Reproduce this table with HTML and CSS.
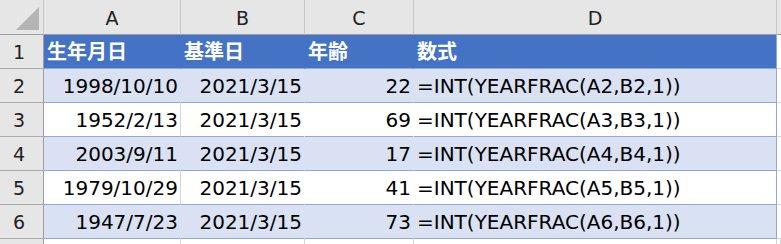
FILE: index.html
```html
<!DOCTYPE html>
<html lang="ja">
<head>
<meta charset="utf-8">
<title>Sheet</title>
<link rel="stylesheet" href="styles.css">
</head>
<body>
<div class="sheet">
  <div class="corner"><svg class="tri" width="26" height="25" viewBox="0 0 26 25"><polygon points="24,1 24,24 1,24" fill="#b4b4b4"/></svg></div>
  <div class="ch">A</div>
  <div class="ch">B</div>
  <div class="ch">C</div>
  <div class="ch">D</div>
  <div class="ch ch-e"></div>

  <div class="rh">1</div>
  <div class="c th">生年月日</div>
  <div class="c th">基準日</div>
  <div class="c th">年齢</div>
  <div class="c th last">数式</div>
  <div class="c e"></div>

  <div class="rh">2</div>
  <div class="c band num">1998/10/10</div>
  <div class="c band num">2021/3/15</div>
  <div class="c band num">22</div>
  <div class="c band last f">=INT(YEARFRAC(A2,B2,1))</div>
  <div class="c e"></div>

  <div class="rh">3</div>
  <div class="c plain num grid">1952/2/13</div>
  <div class="c plain num">2021/3/15</div>
  <div class="c plain num">69</div>
  <div class="c plain last f">=INT(YEARFRAC(A3,B3,1))</div>
  <div class="c e"></div>

  <div class="rh">4</div>
  <div class="c band num">2003/9/11</div>
  <div class="c band num">2021/3/15</div>
  <div class="c band num">17</div>
  <div class="c band last f">=INT(YEARFRAC(A4,B4,1))</div>
  <div class="c e"></div>

  <div class="rh">5</div>
  <div class="c plain num grid">1979/10/29</div>
  <div class="c plain num">2021/3/15</div>
  <div class="c plain num">41</div>
  <div class="c plain last f">=INT(YEARFRAC(A5,B5,1))</div>
  <div class="c e"></div>

  <div class="rh">6</div>
  <div class="c band num">1947/7/23</div>
  <div class="c band num">2021/3/15</div>
  <div class="c band num">73</div>
  <div class="c band last f">=INT(YEARFRAC(A6,B6,1))</div>
  <div class="c e"></div>

  <div class="rh rh-last"></div>
  <div class="c blank"></div>
  <div class="c blank"></div>
  <div class="c blank"></div>
  <div class="c blank"></div>
  <div class="c blank"></div>
</div>
</body>
</html>
```
FILE: styles.css
```css
html, body {
  margin: 0;
  padding: 0;
  background: #ffffff;
}
body {
  width: 781px;
  height: 244px;
  overflow: hidden;
  font-family: "DejaVu Sans", "Noto Sans CJK JP", sans-serif;
  color: #000;
}
.sheet {
  display: grid;
  grid-template-columns: 44px 137px 124px 109px 363px 1fr;
  grid-template-rows: 35px repeat(6, 34px) 1fr;
  width: 781px;
  height: 244px;
}
.sheet > div {
  box-sizing: border-box;
  overflow: hidden;
  white-space: nowrap;
}
.corner {
  background: #e6e6e6;
  border-right: 1px solid #c6c6c6;
  border-bottom: 1px solid #9e9e9e;
  display: flex;
  align-items: flex-start;
  justify-content: flex-start;
  padding: 6px 0 0 15px;
}
.tri { display: block; }
.ch {
  background: #e6e6e6;
  border-right: 1px solid #c8c8c8;
  border-bottom: 1px solid #9e9e9e;
  display: flex;
  align-items: center;
  justify-content: center;
  font-size: 19px;
  color: #222;
  padding-top: 2px;
}
.ch-e { border-right: none; }
.rh {
  background: #e6e6e6;
  border-right: 1px solid #9e9e9e;
  border-bottom: 1px solid #ababab;
  display: flex;
  align-items: center;
  justify-content: center;
  padding-right: 5px;
  font-size: 19px;
  color: #222;
}
.rh-last { border-bottom: none; }
.c {
  display: flex;
  align-items: center;
  font-size: 20px;
  border-bottom: 1px solid #8ea9db;
}
.th {
  background: #4472c4;
  color: #ffffff;
  font-family: "Noto Sans CJK JP", sans-serif;
  font-weight: 700;
  padding-left: 3px;
  padding-bottom: 3px;
  border-right: 1px solid #4472c4;
}
.band {
  background: #d9e1f2;
  border-right: 1px solid #d9e1f2;
}
.plain {
  background: #ffffff;
  border-right: 1px solid #ffffff;
}
.plain.grid { border-right-color: #d4d4d4; }
.num {
  justify-content: flex-end;
  padding-right: 2px;
}
.f {
  justify-content: flex-start;
  padding-left: 3px;
}
.last { border-right: 1px solid #8ea9db; }
.th.last { border-right-color: #8ea9db; }
.e {
  background: #fff;
  border-bottom: 1px solid #d4d4d4;
}
.blank {
  background: #fff;
  border-bottom: none;
  border-right: 1px solid #d4d4d4;
}
```
